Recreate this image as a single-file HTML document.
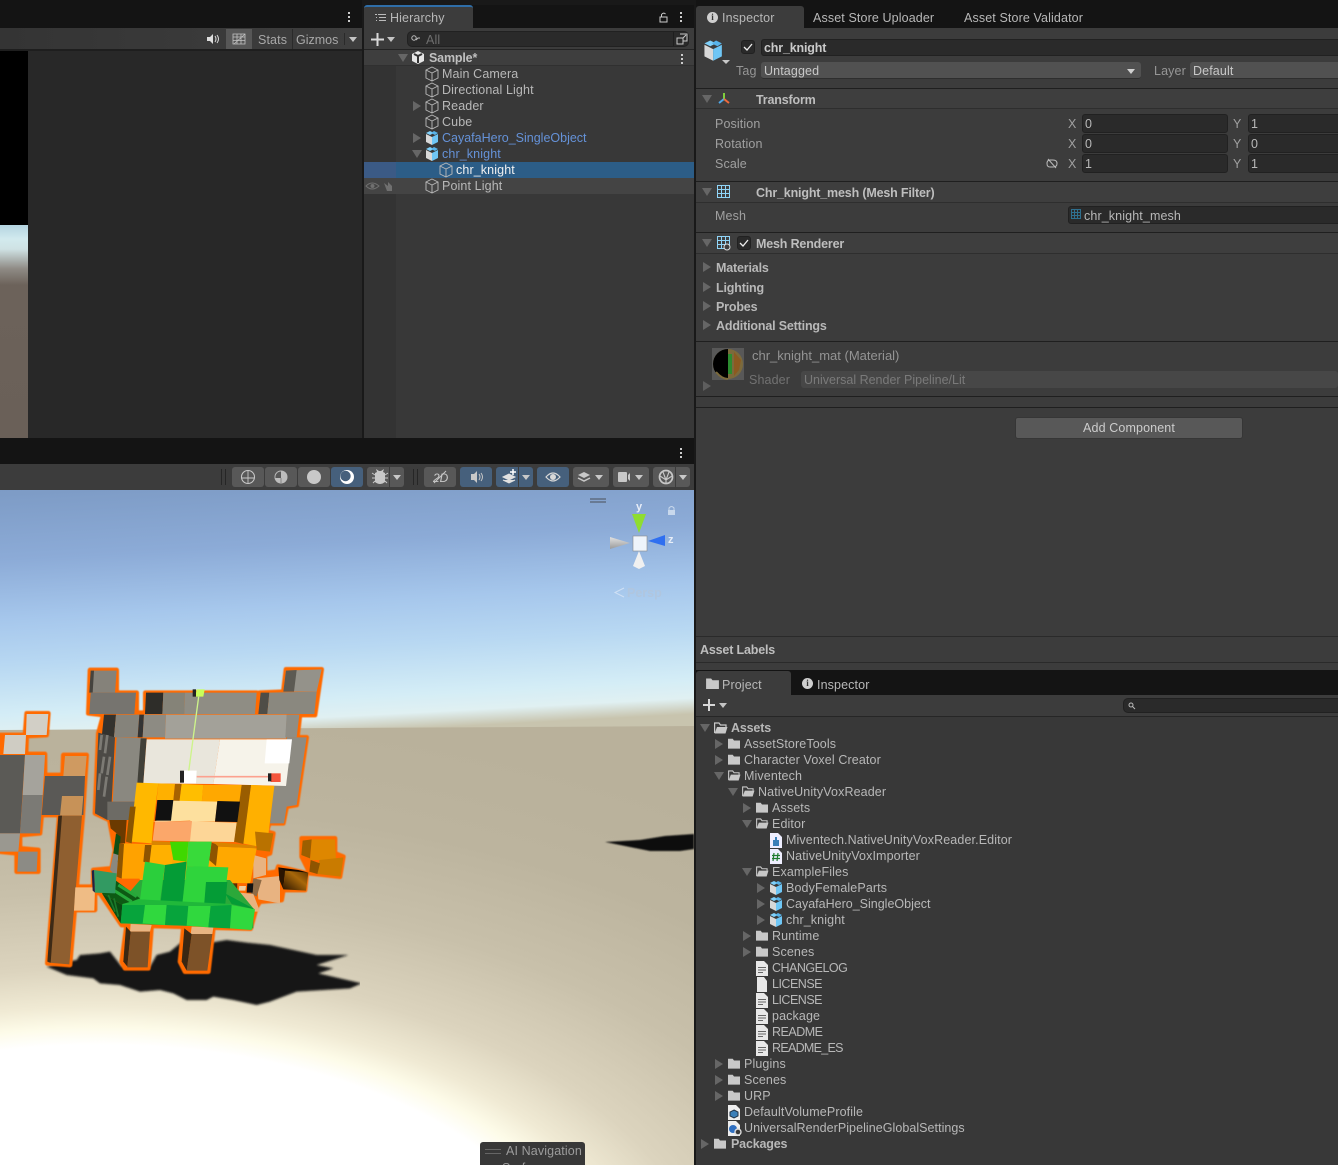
<!DOCTYPE html>
<html><head><meta charset="utf-8"><style>
html,body{margin:0;padding:0;background:#191919;width:1338px;height:1165px;overflow:hidden}
body{position:relative;font-family:"Liberation Sans",sans-serif;font-size:12.5px;color:#b8b8b8}
.a{position:absolute}
.t{position:absolute;white-space:nowrap;line-height:16px;letter-spacing:.12px}
.b{font-weight:bold;letter-spacing:-.17px}
.u{letter-spacing:-.5px}
.l{position:absolute;height:1px;background:#1f1f1f;left:696px;width:642px}
.h{position:absolute;left:696px;width:642px;background:#3e3e3e}
.f{position:absolute;background:#2a2a2a;border:1px solid #212121;border-radius:3px;box-sizing:border-box}
.btn{position:absolute;top:467px;height:20px;background:#585858;border-radius:3px}
.blue{background:#46607c}
svg.i{position:absolute;overflow:visible}
.ar{position:absolute;width:0;height:0}
.ad{border-left:5px solid transparent;border-right:5px solid transparent;border-top:8px solid #666}
.ar2{border-top:5px solid transparent;border-bottom:5px solid transparent;border-left:8px solid #666}
</style></head><body>
<svg width="0" height="0" style="position:absolute"><defs>
<symbol id="cube" viewBox="0 0 14 16"><path d="M7 1L13 4V12L7 15L1 12V4ZM1 4L7 7L13 4M7 7V15" fill="none" stroke="#b8b8b8" stroke-width=".95"/></symbol>
<symbol id="pre" viewBox="0 0 14 16"><path d="M1 4L7 7V15L1 12Z" fill="#d8d8d8"/><path d="M7 7L13 4V12L7 15Z" fill="#6fc6f5"/><path d="M1 3L5 1L9 3L5 5Z" fill="#7fd0fa"/><path d="M9 1L13 3L10 5L6 3Z" fill="#58b4ea"/></symbol>
<symbol id="fo" viewBox="0 0 14 12"><path d="M0 .5H5.500L7 2.500H14V12H0Z" fill="#c8c8c8"/></symbol>
<symbol id="fopen" viewBox="0 0 14 12"><path d="M.6 11V1H5L6.500 3H12V5" fill="none" stroke="#c8c8c8" stroke-width="1.200"/><path d="M3 5H13.500L11.500 11.500H.6Z" fill="#c8c8c8"/></symbol>
<symbol id="doc" viewBox="0 0 12 15"><path d="M0 0H8L12 4V15H0Z" fill="#e8e8e8"/><path d="M2 6.500H10M2 9H10M2 11.500H7" stroke="#666" stroke-width="1"/></symbol>
<symbol id="plain" viewBox="0 0 12 15"><path d="M1 0H8L11 4V15H1Z" fill="#e8e8e8"/></symbol>
</defs></svg>

<!-- top left -->
<div class="a" style="left:0;top:0;width:362px;height:28px;background:#141414"></div>
<div class="a" style="left:0;top:28px;width:362px;height:22px;background:linear-gradient(90deg,#343434,#3e3e3e)"></div>
<div class="a" style="left:0;top:49px;width:362px;height:2px;background:#1e1e1e"></div>
<div class="a" style="left:348px;top:12px;width:2px;height:2px;background:#ccc;box-shadow:0 4px #ccc,0 8px #ccc"></div>
<div class="a" style="left:226px;top:29px;width:26px;height:20px;background:#575757"></div>
<svg class="i" style="left:207px;top:34px" width="14" height="10"><path d="M0 3H3L6 0V10L3 7H0Z" fill="#ddd"/><path d="M8 2Q10 5 8 8M10 1Q13 5 10 9" stroke="#ddd" fill="none"/></svg>
<svg class="i" style="left:232px;top:33px" width="14" height="12"><path d="M1 1H13V11H1ZM1 4H13M1 7.500H13M5 1V11M9 1V11M2 11L13 1" fill="none" stroke="#c4c4c4" stroke-width=".8"/></svg>
<div class="t" style="left:258px;top:32px;color:#a8a8a8">Stats</div>
<div class="a" style="left:292px;top:29px;width:1px;height:20px;background:#2a2a2a"></div>
<div class="t" style="left:296px;top:32px;color:#a8a8a8;letter-spacing:0">Gizmos</div>
<div class="a" style="left:344px;top:33px;width:1px;height:12px;background:#2a2a2a"></div>
<div class="ar" style="left:349px;top:37px;border-left:4px solid transparent;border-right:4px solid transparent;border-top:5px solid #c4c4c4"></div>
<div class="a" style="left:0;top:51px;width:28px;height:174px;background:#000"></div>
<div class="a" style="left:0;top:225px;width:28px;height:213px;background:linear-gradient(180deg,#b4d4e0 0,#d2eaee 14px,#cfe2e4 24px,#8e8a84 44px,#6c625a 60px,#6a6058 100%)"></div>
<div class="a" style="left:28px;top:51px;width:334px;height:387px;background:#282828"></div>
<div class="a" style="left:0;top:438px;width:694px;height:26px;background:#141414"></div>
<div class="a" style="left:680px;top:448px;width:2px;height:2px;background:#ccc;box-shadow:0 4px #ccc,0 8px #ccc"></div>

<!-- hierarchy -->
<div class="a" style="left:364px;top:5px;width:330px;height:23px;background:#141414"></div>
<div class="a" style="left:364px;top:5px;width:109px;height:23px;background:#3c3c3c;border-top:2px solid #2f6ea8;box-sizing:border-box;border-radius:3px 3px 0 0"></div>
<svg class="i" style="left:375px;top:13px" width="11" height="10"><path d="M3 1.500H11M4 4.500H11M4 7.500H11" stroke="#bbb"/><path d="M0 1.500H2M1 4.500H2M1 7.500H2" stroke="#bbb"/></svg>
<div class="t" style="left:390px;top:10px;color:#b8b8b8">Hierarchy</div>
<svg class="i" style="left:659px;top:12px" width="9" height="11"><path d="M1 5H8V10H1ZM2.500 5V2.500Q4.500 0 6.500 2" fill="none" stroke="#ccc"/></svg>
<div class="a" style="left:680px;top:12px;width:2px;height:2px;background:#ccc;box-shadow:0 4px #ccc,0 8px #ccc"></div>
<div class="a" style="left:364px;top:28px;width:330px;height:410px;background:#383838"></div>
<div class="a" style="left:364px;top:28px;width:330px;height:21px;background:#3c3c3c;border-bottom:1px solid #232323"></div>
<svg class="i" style="left:371px;top:33px" width="13" height="13"><path d="M6.500 0V13M0 6.500H13" stroke="#d8d8d8" stroke-width="2"/></svg>
<div class="ar" style="left:387px;top:37px;border-left:4px solid transparent;border-right:4px solid transparent;border-top:5px solid #c4c4c4"></div>
<div class="f" style="left:407px;top:31px;width:282px;height:16px;border-radius:5px"></div>
<svg class="i" style="left:411px;top:35px" width="9" height="8"><circle cx="3" cy="3" r="2.200" fill="none" stroke="#bbb"/><path d="M5 5L7 3H9" stroke="#bbb" fill="none"/></svg>
<div class="t" style="left:426px;top:32px;color:#6e6e6e">All</div>
<div class="a" style="left:673px;top:32px;width:1px;height:14px;background:#1e1e1e"></div>
<svg class="i" style="left:676px;top:33px" width="12" height="12"><path d="M4 1H11V8H7M1 5H7V11H1Z M7 5L10 2" fill="none" stroke="#c8c8c8"/></svg>
<div class="a" style="left:396px;top:66px;width:298px;height:372px;background:#383838"></div>
<div class="a" style="left:364px;top:66px;width:32px;height:372px;background:#333"></div>
<div class="a" style="left:364px;top:50px;width:330px;height:15px;background:#3e3e3e;border-bottom:1px solid #303030"></div>
<div class="a" style="left:364px;top:162px;width:330px;height:16px;background:#2c5d87"></div>
<div class="a" style="left:364px;top:162px;width:32px;height:16px;background:#3b5a85"></div>
<div class="a" style="left:364px;top:178px;width:330px;height:16px;background:#444"></div>
<div class="ar ad" style="left:398px;top:54px"></div>
<svg class="i" style="left:411px;top:50px" width="14" height="15"><path d="M7 1L13 4V11L7 14L1 11V4Z" fill="#e6e6e6"/><path d="M7 6L3 4M7 6L11 4M7 6V13" stroke="#333" stroke-width="2"/></svg>
<div class="t b" style="left:429px;top:50px;color:#c0c0c0">Sample*</div>
<div class="a" style="left:681px;top:54px;width:2px;height:2px;background:#ccc;box-shadow:0 4px #ccc,0 8px #ccc"></div>
<svg class="i" style="left:425px;top:66px" width="14" height="16"><use href="#cube"/></svg><div class="t" style="left:442px;top:66px">Main Camera</div>
<svg class="i" style="left:425px;top:82px" width="14" height="16"><use href="#cube"/></svg><div class="t" style="left:442px;top:82px">Directional Light</div>
<div class="ar ar2" style="left:413px;top:101px"></div>
<svg class="i" style="left:425px;top:98px" width="14" height="16"><use href="#cube"/></svg><div class="t" style="left:442px;top:98px">Reader</div>
<svg class="i" style="left:425px;top:114px" width="14" height="16"><use href="#cube"/></svg><div class="t" style="left:442px;top:114px">Cube</div>
<div class="ar ar2" style="left:413px;top:133px"></div>
<svg class="i" style="left:425px;top:130px" width="14" height="16"><use href="#pre"/></svg><div class="t" style="left:442px;top:130px;color:#6592d8;letter-spacing:0">CayafaHero_SingleObject</div>
<div class="ar ad" style="left:412px;top:150px"></div>
<svg class="i" style="left:425px;top:146px" width="14" height="16"><use href="#pre"/></svg><div class="t" style="left:442px;top:146px;color:#6592d8">chr_knight</div>
<svg class="i" style="left:439px;top:162px" width="14" height="16"><use href="#cube"/></svg><div class="t" style="left:456px;top:162px;color:#f0f0f0">chr_knight</div>
<svg class="i" style="left:366px;top:181px" width="30" height="11"><path d="M0 5Q6 -1 13 5Q6 11 0 5Z" fill="none" stroke="#707070"/><circle cx="6.500" cy="5" r="2" fill="#707070"/><path d="M18 2L22 5V1L26 5V10H21Z" fill="#707070"/></svg>
<svg class="i" style="left:425px;top:178px" width="14" height="16"><use href="#cube"/></svg><div class="t" style="left:442px;top:178px">Point Light</div>

<!-- scene toolbar -->
<div class="a" style="left:0;top:464px;width:694px;height:26px;background:#3c3c3c"></div>
<div class="a" style="left:221px;top:469px;width:3px;height:16px;border-left:1px solid #262626;border-right:1px solid #262626"></div>
<div class="btn" style="left:232px;width:32px"></div><div class="btn" style="left:265px;width:32px"></div><div class="btn" style="left:298px;width:32px"></div><div class="btn blue" style="left:331px;width:32px"></div>
<div class="btn" style="left:367px;width:22px;border-radius:3px 0 0 3px"></div><div class="btn" style="left:390px;width:14px;border-radius:0 3px 3px 0"></div>
<div class="a" style="left:413px;top:469px;width:3px;height:16px;border-left:1px solid #262626;border-right:1px solid #262626"></div>
<div class="btn" style="left:424px;width:32px"></div><div class="btn blue" style="left:460px;width:32px"></div>
<div class="btn blue" style="left:496px;width:22px;border-radius:3px 0 0 3px"></div><div class="btn blue" style="left:519px;width:14px;border-radius:0 3px 3px 0"></div>
<div class="btn blue" style="left:537px;width:32px"></div><div class="btn" style="left:573px;width:36px"></div><div class="btn" style="left:613px;width:36px"></div>
<div class="btn" style="left:653px;width:22px;border-radius:3px 0 0 3px"></div><div class="btn" style="left:676px;width:14px;border-radius:0 3px 3px 0"></div>
<svg class="i" style="left:0;top:464px" width="694" height="26" fill="#c8c8c8">
<g transform="translate(248,13)"><circle r="6.500" fill="none" stroke="#c8c8c8" stroke-width="1.100"/><path d="M0 -6V6M-6 1H6" stroke="#c8c8c8" stroke-width=".9"/></g>
<g transform="translate(281,13)"><circle r="6.500" fill="#bdbdbd"/><path d="M0 1V-5.500A5.500 5.500 0 0 0 -5.500 1Z" fill="#585858"/><path d="M0 1V6" stroke="#777" stroke-width=".8"/></g>
<circle cx="314" cy="13" r="7"/>
<g transform="translate(347,13)"><circle r="7" fill="#fff"/><circle cx="-1.500" cy="-1" r="5.200" fill="#46607c"/></g>
<path d="M376 5L379 7H381L384 5L383 8L385 9V18Q380 22 375 18V9L377 8Z"/><path d="M372 9L375 11M372 14H375M373 19L375 17M388 9L385 11M388 14H385M387 19L385 17" stroke="#c8c8c8"/>
<path d="M393 11H401L397 16Z"/>
<text x="433" y="18" font-family="Liberation Sans" font-size="12" font-style="italic" fill="#c8c8c8">2D</text><path d="M434 19L446 7" stroke="#c8c8c8"/>
<path d="M471 10H474L477 7V19L474 16H471Z"/><path d="M479 10Q481 13 479 16M481 9Q484 13 481 17" stroke="#c8c8c8" fill="none"/>
<path d="M503 13L509 10L515 13L509 16ZM503 16L509 19L515 16" stroke="#e0e0e0" fill="#e0e0e0"/><path d="M510 8H516M513 5V11" stroke="#fff" stroke-width="1.500"/>
<path d="M522 11H530L526 16Z"/>
<path d="M546 13Q553 5 560 13Q553 21 546 13Z" fill="none" stroke="#d8d8d8" stroke-width="1.200"/><circle cx="553" cy="13" r="3" fill="#d8d8d8"/>
<path d="M578 11L584 8L590 11L584 14Z"/><path d="M578 14L584 17L590 14" fill="none" stroke="#c8c8c8" stroke-width="1.500"/><path d="M595 11H603L599 16Z"/>
<rect x="618" y="8" width="9" height="10" rx="1"/><path d="M628 11L630 9V17L628 15Z"/><path d="M635 11H643L639 16Z"/>
<g transform="translate(666,13)"><circle r="6.500" fill="none" stroke="#c8c8c8" stroke-width="1.700"/><path d="M-6 -1L0 3L6 -1M0 3V6.500M-3 -5L0 3M3 -5L0 3" fill="none" stroke="#c8c8c8" stroke-width="1.100"/></g><path d="M679 11H687L683 16Z"/>
</svg>

<!-- scene -->
<div class="a" style="left:0;top:490px;width:694px;height:260px;background:linear-gradient(177deg,#7d9bc5 0,#8cabd7 70px,#a6c7ec 130px,#b8d8f2 175px,#d4edf6 225px,#e0f0f2 244px,#c8c4ae 260px)"></div>
<div class="a" style="left:0;top:725px;width:694px;height:440px;clip-path:polygon(0 5px,694px 1px,694px 440px,0 440px);background:radial-gradient(ellipse 470px 255px at 100px 575px,#fff 0,#fff 100%,#fdfbe8 107%,#f0ead4 115%,#dcd4be 130%,#c8c0aa 160%,#bcb49e 195%,#b9b19b 230%)"></div>
<svg class="a" style="left:0;top:650px;overflow:hidden" width="360" height="370" viewBox="0 0 1080 1110">
<defs><filter id="bl"><feGaussianBlur stdDeviation="3.500"/></filter><filter id="bo"><feGaussianBlur stdDeviation="1.200"/></filter>
<linearGradient id="hg" x1="0" x2="1" y1="1" y2="0"><stop offset="0" stop-color="#2a1400"/><stop offset=".6" stop-color="#a8680a"/><stop offset="1" stop-color="#5c3400"/></linearGradient></defs>
<polygon filter="url(#bl)" fill="#141414" points="140,950 200,935 230,930 240,915 300,910 330,905 365,950 450,950 470,915 510,905 540,880 620,880 680,870 740,878 810,885 880,900 950,915 1045,915 950,945 1000,955 955,970 1085,1000 1050,1015 890,1025 810,1055 770,1065 700,1050 640,1040 620,1050 560,1050 520,1030 480,1020 420,1025 360,1005 300,1000 280,985 200,975"/>
<g fill="#ff6a00" stroke="#ff6a00" stroke-width="14" stroke-linejoin="round" filter="url(#bo)">
<polygon points="270,60 350,60 350,128 410,128 410,188 436,188 436,128 770,128 770,188 778,188 778,128 850,125 858,58 965,58 945,195 900,195 892,262 920,262 890,465 860,470 850,520 808,520 800,545 820,550 810,610 795,615 795,670 830,665 835,650 920,670 915,720 850,720 845,750 780,755 770,770 752,836 365,825 300,730 280,725 280,660 335,655 345,600 328,510 285,490 295,250 310,195 265,190"/>
<polygon points="190,315 260,315 248,500 210,945 142,940 178,495 125,495 120,550 60,555 60,595 115,600 115,665 50,665 50,610 0,605 0,255 75,255 80,190 145,190 140,255 80,258 78,312 135,312 135,375 188,375"/>
<polygon points="225,710 285,710 285,780 225,780"/>
<polygon points="380,825 455,825 445,955 375,955 365,935"/>
<polygon points="550,835 640,835 625,965 555,965 540,935"/>
<polygon points="905,565 1005,565 1005,610 1030,620 1020,680 930,670 905,620"/>
</g>
<!-- axe -->
<polygon fill="#d2cfc6" points="80,192 145,192 140,255 78,255"/><polygon fill="#cfccc3" points="15,255 78,255 75,312 10,312"/>
<polygon fill="#5b5a56" points="0,315 75,315 60,550 0,550"/><polygon fill="#a5a39c" points="75,315 135,315 128,435 68,435"/><polygon fill="#7b7a75" points="68,435 128,435 120,550 60,550"/>
<polygon fill="#5a5956" points="135,378 255,378 250,495 125,495"/><polygon fill="#9a9890" points="0,550 60,550 55,605 0,605"/><polygon fill="#8c8b85" points="55,605 113,605 110,665 52,665"/>
<polygon fill="#cf9a61" points="195,318 260,318 255,378 190,378"/><polygon fill="#c79258" points="186,438 250,438 245,497 180,497"/>
<polygon fill="#8f5f30" points="178,497 246,497 208,943 145,938"/><polygon fill="#3d2a16" points="175,497 186,497 152,938 142,935"/>
<polygon fill="#efbc85" points="226,712 285,712 283,782 222,782"/>
<!-- legs -->
<polygon fill="#e9b582" points="392,822 455,825 450,845 390,845"/><polygon fill="#7d5228" points="392,845 450,845 443,952 382,952"/><polygon fill="#3a2712" points="378,830 392,845 382,950 370,935"/>
<polygon fill="#e9b582" points="575,830 640,832 637,852 572,852"/><polygon fill="#7d5228" points="575,852 637,852 622,962 560,962"/><polygon fill="#3a2712" points="553,835 575,852 560,962 545,935"/>
<!-- helmet -->
<polygon fill="#85827a" points="272,62 350,62 345,128 270,128"/><polygon fill="#45433e" points="272,62 282,62 278,128 268,128"/>
<polygon fill="#76746f" points="272,128 408,128 403,192 268,192"/>
<polygon fill="#2e2d29" points="438,128 490,128 487,192 435,192"/><polygon fill="#858378" points="490,128 555,128 553,192 487,192"/><polygon fill="#8f8d84" points="555,128 770,128 765,192 553,192"/>
<polygon fill="#4f4d47" points="782,128 808,128 802,192 775,192"/><polygon fill="#8a887f" points="808,128 950,125 943,192 802,192"/>
<polygon fill="#94928a" points="858,62 965,58 950,125 850,125"/><polygon fill="#5c5a53" points="858,62 890,60 882,125 850,125"/>
<polygon fill="#33322e" points="312,194 348,194 342,262 305,262"/><polygon fill="#85837b" points="348,194 418,194 413,262 342,262"/><polygon fill="#333" points="418,194 432,194 428,262 413,262"/><polygon fill="#8d8b83" points="432,194 498,194 495,262 428,262"/><polygon fill="#a3a199" points="498,194 860,194 858,266 495,266"/><polygon fill="#8f8d85" points="860,194 898,194 890,262 856,262"/>
<polygon fill="#4c4a46" points="295,248 345,262 335,455 322,510 285,490"/><path d="M305 255L300 300M322 255L315 310M312 320L305 370M330 320L322 375M300 370L295 420M320 380L312 440" stroke="#7c7a74" stroke-width="8" fill="none"/>
<polygon fill="#8a8880" points="350,262 440,265 415,395 405,455 338,455"/><polygon fill="#414039" points="422,265 440,265 430,400 412,400"/>
<polygon fill="#8d8b83" points="860,262 920,262 890,465 860,470 852,520 810,520 822,405 858,405"/><polygon fill="#6d6b65" points="322,455 405,455 395,510 322,510"/>
<polygon fill="#e9e6dc" points="440,268 660,268 640,402 430,400"/><polygon fill="#f6f3ea" points="660,268 875,268 858,408 640,402"/><polygon fill="#ffffff" points="800,268 876,268 868,340 794,340"/>
<!-- body block in crop coords -->
<g transform="translate(270,390)">
<polygon fill="#ffa800" points="100,190 500,205 480,310 150,300"/>
<polygon fill="#6b3a00" points="58,120 110,120 105,190 85,190 80,160 62,145"/>
<polygon fill="#0e4d14" points="78,160 92,170 85,250 70,220"/>
<polygon fill="#8a8880" points="70,220 85,225 80,290 60,270"/>
<polygon fill="#ffb800" points="140,8 205,10 190,130 185,190 120,185"/>
<polygon fill="#8a5500" points="120,80 137,80 125,190 108,185"/>
<polygon fill="#ffb000" points="205,10 255,12 250,62 200,60"/>
<polygon fill="#a86200" points="255,12 275,12 268,68 250,62"/>
<polygon fill="#ffbe00" points="275,12 340,15 335,70 268,68"/>
<polygon fill="#ffa800" points="340,15 455,15 450,65 335,70"/>
<polygon fill="#ffb000" points="483,15 553,18 530,205 458,190"/>
<polygon fill="#9a5d00" points="455,15 483,15 460,192 432,185"/>
<polygon fill="#fde09e" points="245,62 382,65 375,125 305,125 300,122 190,126 200,122"/>
<polygon fill="#fdd697" points="305,124 440,128 432,186 298,184"/>
<polygon fill="#fba76a" points="195,125 306,123 300,184 188,182"/>
<polygon fill="#111" points="202,60 250,60 243,122 195,122"/>
<polygon fill="#111" points="382,63 450,65 442,126 375,125"/>
<polygon fill="#ffa200" points="100,192 168,194 158,296 92,296"/>
<polygon fill="#8e5400" points="88,190 102,192 95,296 80,290"/>
<polygon fill="#8e5400" points="165,195 185,195 178,252 160,245"/>
<polygon fill="#ffb000" points="185,195 250,195 245,258 180,255"/>
<polygon fill="#d98500" points="185,183 250,187 250,195 185,195"/>
<polygon fill="#b97200" points="495,155 550,160 540,215 500,210"/>
<polygon fill="#e8b381" points="490,225 528,235 528,285 490,295"/>
<polygon fill="#ffa800" points="385,200 498,205 482,305 415,310 420,262 378,258"/>
<polygon fill="#8e5400" points="365,188 385,195 378,258 357,240"/>
<polygon fill="#d98500" points="370,186 495,197 498,205 385,200"/>
<polygon fill="#e8b381" points="500,295 570,288 570,370 505,358"/>
<polygon fill="#8e6a45" points="490,295 515,300 500,350 482,340"/>
<polygon fill="#5a3000" points="412,310 442,310 442,335 410,335"/>
<polygon fill="#ff6a00" points="442,310 472,310 472,338 442,338"/><polygon fill="#f0d0a0" points="448,318 468,318 466,332 446,332"/>
<polygon fill="#111" points="472,310 490,310 488,338 470,338"/>
<polygon fill="#e8b381" points="420,335 490,342 510,395 495,395"/>
<polygon fill="#2ca83a" points="150,300 420,300 490,385 490,445 92,430 90,370"/>
<polygon fill="#3fd800" points="240,185 295,185 290,245 250,240"/>
<polygon fill="#38da3a" points="295,185 365,185 355,262 290,258"/>
<polygon fill="#2bcf3c" points="165,245 225,255 210,365 150,358"/>
<polygon fill="#049c36" points="225,255 290,245 277,372 212,366"/>
<polygon fill="#2fd43c" points="290,258 415,262 405,340 345,345 345,378 277,372"/>
<polygon fill="#049c36" points="348,306 412,306 405,382 342,380"/>
<polygon fill="#0d5a14" points="75,300 150,355 97,375 36,340"/>
<path d="M85 315L140 350M70 330L125 365" stroke="#26a83a" stroke-width="9"/>
<polygon fill="#0a4a12" points="36,340 97,375 92,430"/>
<path d="M55 345L75 395M72 355L85 410" stroke="#1a7a2a" stroke-width="5"/>
<polygon fill="#329a62" points="12,270 80,280 75,340 15,338"/>
<polygon fill="#224" points="5,272 12,270 15,338 8,332"/>
<polygon fill="#049c36" points="405,340 495,388 425,372"/>
<polygon fill="#20b83a" points="150,358 425,372 425,380 97,378 97,372"/>
<polygon fill="#07a43c" points="97,375 165,375 158,430 92,430"/>
<polygon fill="#30d83e" points="165,375 230,375 225,435 158,430"/>
<polygon fill="#07a43c" points="230,375 295,378 290,437 225,435"/>
<polygon fill="#30d83e" points="295,378 362,378 355,442 290,437"/>
<polygon fill="#07a43c" points="362,378 425,375 420,445 355,442"/>
<polygon fill="#30d83e" points="425,375 495,388 485,450 420,445"/>
</g>
<polygon fill="#120800" points="835,652 895,660 925,668 855,680"/><polygon fill="#2a1400" points="835,652 855,662 850,718 838,690"/><polygon fill="url(#hg)" points="855,662 925,668 918,722 850,718"/>
<polygon fill="#de8700" points="935,568 1005,568 1008,630 930,630"/><polygon fill="#9c5f00" points="908,572 935,568 930,625 904,615"/><polygon fill="#c97b00" points="958,630 1030,622 1022,680 952,672"/><polygon fill="#8e5400" points="932,630 960,640 952,672 928,665"/>
<!-- gizmo -->
<polygon fill="#c9ff5a" points="590,118 614,118 610,140 586,140"/><rect x="578" y="118" width="10" height="22" fill="#222"/>
<line x1="596" y1="140" x2="566" y2="365" stroke="#cdf48a" stroke-width="4"/>
<line x1="590" y1="380" x2="805" y2="380" stroke="#fca18f" stroke-width="5"/>
<polygon fill="#fff" points="550,362 590,362 588,400 548,400"/><rect x="540" y="362" width="12" height="36" fill="#222"/>
<rect x="812" y="370" width="30" height="26" fill="#f4553c"/><rect x="804" y="370" width="10" height="24" fill="#222"/>
</svg>
<svg class="a" style="left:0;top:490px;overflow:visible" width="694" height="675" viewBox="0 490 694 675">
<defs>
<filter id="b2"><feGaussianBlur stdDeviation=".8"/></filter>
<linearGradient id="gl" x1="0" x2="0" y1="0" y2="1"><stop offset="0" stop-color="#e2e2e2"/><stop offset="1" stop-color="#9a9a9a"/></linearGradient>
</defs>
<polygon filter="url(#b2)" fill="#0e0e0e" points="605,842 640,840 665,836 694,834 694,849 680,851 650,851 625,846"/>
<path d="M590 499H606M590 502H606" stroke="#4a4f58" stroke-width="1"/>
<polygon fill="#8fdd30" points="632,514 646,514 639,533"/>
<polygon fill="#2f6ff0" points="648,541 665,535 665,546"/>
<polygon fill="url(#gl)" points="610,537 630,543 610,549"/>
<polygon fill="#f0f0f0" points="639,551 645,566 639,569 633,566"/>
<rect x="633" y="536" width="14" height="15" fill="#eef4fb" stroke="#8a8a8a" stroke-width=".6"/>
<text x="636" y="510" font-family="Liberation Sans" font-size="11" font-weight="bold" fill="#e8eef8">y</text>
<text x="668" y="543" font-family="Liberation Sans" font-size="11" font-weight="bold" fill="#e8eef8">z</text>
<rect x="668" y="510" width="7" height="5" fill="#c8d8ec"/><path d="M669 510V508Q671.500 505 674 508V510" fill="none" stroke="#c8d8ec"/>
<path d="M624 588L615 592.500L624 597" fill="none" stroke="#cfe0f4"/>
<text x="627" y="597" font-family="Liberation Sans" font-size="12.500" font-weight="bold" fill="#b0c6df">Persp</text>
</svg>
<div class="a" style="left:480px;top:1142px;width:105px;height:23px;background:#383838;border-radius:3px 3px 0 0;overflow:hidden">
<div class="a" style="left:5px;top:7px;width:16px;height:3px;border-top:1px solid #666;border-bottom:1px solid #666"></div>
<div class="t" style="left:26px;top:1px;color:#9c9c9c">AI Navigation</div>
<div class="t" style="left:22px;top:18px;color:#9c9c9c">Surfaces</div></div>

<!-- divider -->
<div class="a" style="left:694px;top:0;width:2px;height:1165px;background:#191919"></div>

<!-- inspector -->
<div class="a" style="left:696px;top:0;width:642px;height:28px;background:#141414"></div>
<div class="a" style="left:696px;top:6px;width:108px;height:22px;background:#3c3c3c;border-radius:3px 3px 0 0"></div>
<div class="a" style="left:707px;top:12px;width:11px;height:11px;border-radius:50%;background:#cfcfcf;color:#333;font:bold 9px/11px 'Liberation Serif',serif;text-align:center">i</div>
<div class="t" style="left:722px;top:10px">Inspector</div>
<div class="t" style="left:813px;top:10px">Asset Store Uploader</div>
<div class="t" style="left:964px;top:10px">Asset Store Validator</div>
<div class="a" style="left:696px;top:28px;width:642px;height:608px;background:#3c3c3c"></div>
<svg class="i" style="left:703px;top:39px" width="22" height="22"><g transform="scale(1.450)"><use href="#pre" width="14" height="16"/></g></svg>
<div class="ar" style="left:722px;top:60px;border-left:4px solid transparent;border-right:4px solid transparent;border-top:4px solid #c8c8c8"></div>
<div class="f" style="left:741px;top:40px;width:14px;height:14px"></div>
<svg class="i" style="left:743px;top:43px" width="10" height="8"><path d="M1 4L4 7L9 1" fill="none" stroke="#eee" stroke-width="1.300"/></svg>
<div class="f" style="left:761px;top:39px;width:590px;height:17px"></div>
<div class="t b" style="left:764px;top:40px;color:#cacaca">chr_knight</div>
<div class="t" style="left:736px;top:63px;color:#969696">Tag</div>
<div class="a" style="left:761px;top:62px;width:380px;height:17px;background:#515151;border-radius:3px;border-bottom:1px solid #2e2e2e;box-sizing:border-box"></div>
<div class="t" style="left:764px;top:63px;color:#c8c8c8">Untagged</div>
<div class="ar" style="left:1127px;top:69px;border-left:4px solid transparent;border-right:4px solid transparent;border-top:5px solid #d0d0d0"></div>
<div class="t" style="left:1154px;top:63px;color:#969696">Layer</div>
<div class="a" style="left:1190px;top:62px;width:160px;height:17px;background:#515151;border-radius:3px;border-bottom:1px solid #2e2e2e;box-sizing:border-box"></div>
<div class="t" style="left:1193px;top:63px;color:#c8c8c8">Default</div>

<div class="h" style="top:88px;height:21px;border-top:1px solid #1f1f1f;border-bottom:1px solid #2e2e2e;box-sizing:border-box"></div>
<div class="ar ad" style="left:702px;top:95px"></div>
<svg class="i" style="left:717px;top:92px" width="14" height="14"><path d="M7 1V7" stroke="#7fce3c" stroke-width="2"/><path d="M7 7L2 11" stroke="#4fa8e8" stroke-width="2"/><path d="M7 7L12 11" stroke="#ef6a3c" stroke-width="2"/></svg>
<div class="t b" style="left:756px;top:92px;color:#bebebe">Transform</div>
<div class="t" style="left:715px;top:116px;color:#a0a0a0">Position</div>
<div class="t" style="left:715px;top:136px;color:#a0a0a0">Rotation</div>
<div class="t" style="left:715px;top:156px;color:#a0a0a0">Scale</div>
<svg class="i" style="left:1046px;top:158px" width="12" height="11"><path d="M1 5.500Q1 2 4 2H7Q11 2 11 5.500T7 9H4Q1 9 1 5.500ZM2 1L10 10" fill="none" stroke="#bbb"/></svg>
<div class="t" style="left:1068px;top:116px;color:#a0a0a0">X</div><div class="t" style="left:1068px;top:136px;color:#a0a0a0">X</div><div class="t" style="left:1068px;top:156px;color:#a0a0a0">X</div>
<div class="f" style="left:1082px;top:114px;width:146px;height:19px"></div><div class="f" style="left:1082px;top:134px;width:146px;height:19px"></div><div class="f" style="left:1082px;top:154px;width:146px;height:19px"></div>
<div class="t" style="left:1085px;top:116px">0</div><div class="t" style="left:1085px;top:136px">0</div><div class="t" style="left:1085px;top:156px">1</div>
<div class="t" style="left:1233px;top:116px;color:#a0a0a0">Y</div><div class="t" style="left:1233px;top:136px;color:#a0a0a0">Y</div><div class="t" style="left:1233px;top:156px;color:#a0a0a0">Y</div>
<div class="f" style="left:1248px;top:114px;width:100px;height:19px"></div><div class="f" style="left:1248px;top:134px;width:100px;height:19px"></div><div class="f" style="left:1248px;top:154px;width:100px;height:19px"></div>
<div class="t" style="left:1251px;top:116px">1</div><div class="t" style="left:1251px;top:136px">0</div><div class="t" style="left:1251px;top:156px">1</div>

<div class="h" style="top:181px;height:22px;border-top:1px solid #1f1f1f;border-bottom:1px solid #2e2e2e;box-sizing:border-box"></div>
<div class="ar ad" style="left:702px;top:188px"></div>
<svg class="i" style="left:717px;top:185px" width="13" height="13"><path d="M.5 .5H12.500V12.500H.5ZM4.500 .5V12.500M8.500 .5V12.500M.5 4.500H12.500M.5 8.500H12.500" fill="none" stroke="#8fd4f7"/></svg>
<div class="t b" style="left:756px;top:185px;color:#bebebe">Chr_knight_mesh (Mesh Filter)</div>
<div class="t" style="left:715px;top:208px;color:#a0a0a0">Mesh</div>
<div class="f" style="left:1068px;top:206px;width:280px;height:18px"></div>
<svg class="i" style="left:1071px;top:209px" width="10" height="10"><path d="M.5 .5H9.500V9.500H.5ZM3.500 .5V9.500M6.500 .5V9.500M.5 3.500H9.500M.5 6.500H9.500" fill="none" stroke="#2f6f8e"/></svg>
<div class="t" style="left:1084px;top:208px">chr_knight_mesh</div>

<div class="h" style="top:232px;height:22px;border-top:1px solid #1f1f1f;border-bottom:1px solid #2e2e2e;box-sizing:border-box"></div>
<div class="ar ad" style="left:702px;top:239px"></div>
<svg class="i" style="left:717px;top:236px" width="14" height="14"><path d="M.5 .5H12.500V12.500H.5ZM4.500 .5V12.500M8.500 .5V12.500M.5 4.500H12.500M.5 8.500H12.500" fill="none" stroke="#8fd4f7"/><circle cx="10" cy="11" r="3" fill="#3c3c3c" stroke="#ddd"/></svg>
<div class="f" style="left:737px;top:236px;width:14px;height:14px"></div>
<svg class="i" style="left:739px;top:239px" width="10" height="8"><path d="M1 4L4 7L9 1" fill="none" stroke="#eee" stroke-width="1.300"/></svg>
<div class="t b" style="left:756px;top:236px;color:#bebebe">Mesh Renderer</div>
<div class="ar ar2" style="left:703px;top:262px"></div><div class="t b" style="left:716px;top:260px;color:#b8b8b8">Materials</div>
<div class="ar ar2" style="left:703px;top:282px"></div><div class="t b" style="left:716px;top:280px;color:#b8b8b8">Lighting</div>
<div class="ar ar2" style="left:703px;top:301px"></div><div class="t b" style="left:716px;top:299px;color:#b8b8b8">Probes</div>
<div class="ar ar2" style="left:703px;top:320px"></div><div class="t b" style="left:716px;top:318px;color:#b8b8b8">Additional Settings</div>

<div class="l" style="top:341px"></div>
<div class="a" style="left:712px;top:348px;width:32px;height:32px;background:#585858"></div>
<svg class="i" style="left:712px;top:348px" width="32" height="32"><circle cx="16" cy="16" r="15" fill="#7c6a3c"/><path d="M16 1A15 15 0 0 0 16 31Z" fill="#000"/><path d="M16 6H20V26H16Z" fill="#2c8c30"/><path d="M22 4L29 12L27 22L22 28Z" fill="#8c5a20"/><path d="M4 24Q10 31 16 31" stroke="#7c6a3c" stroke-width="2" fill="none"/></svg>
<div class="t" style="left:752px;top:348px;font-size:13px;letter-spacing:0;color:#949494">chr_knight_mat (Material)</div>
<div class="t" style="left:749px;top:372px;color:#727272">Shader</div>
<div class="a" style="left:801px;top:371px;width:537px;height:17px;background:#474747;border-radius:3px"></div>
<div class="t" style="left:804px;top:372px;color:#7a7a7a;letter-spacing:0">Universal Render Pipeline/Lit</div>
<div class="ar" style="left:703px;top:381px;border-top:5px solid transparent;border-bottom:5px solid transparent;border-left:8px solid #5e5e5e"></div>
<div class="l" style="top:396px"></div>
<div class="l" style="top:407px"></div>
<div class="a" style="left:1015px;top:417px;width:228px;height:22px;background:#585858;border-radius:3px;border:1px solid #363636;box-sizing:border-box"></div>
<div class="t" style="left:1015px;top:420px;width:228px;text-align:center;color:#cccccc">Add Component</div>

<div class="a" style="left:696px;top:636px;width:642px;height:34px;background:#3c3c3c"></div>
<div class="l" style="top:636px;background:#2a2a2a"></div>
<div class="l" style="top:662px;background:#2a2a2a"></div>
<div class="t b" style="left:700px;top:642px;color:#bebebe">Asset Labels</div>

<!-- project -->
<div class="a" style="left:696px;top:670px;width:642px;height:25px;background:#141414"></div>
<div class="a" style="left:696px;top:671px;width:95px;height:24px;background:#3c3c3c;border-radius:3px 3px 0 0"></div>
<svg class="i" style="left:706px;top:678px" width="13" height="11"><use href="#fo"/></svg>
<div class="t" style="left:722px;top:677px">Project</div>
<div class="a" style="left:802px;top:678px;width:11px;height:11px;border-radius:50%;background:#cfcfcf;color:#333;font:bold 9px/11px 'Liberation Serif',serif;text-align:center">i</div>
<div class="t" style="left:817px;top:677px">Inspector</div>
<div class="a" style="left:696px;top:695px;width:642px;height:21px;background:#3c3c3c;border-bottom:1px solid #262626"></div>
<svg class="i" style="left:703px;top:699px" width="12" height="12"><path d="M6 0V12M0 6H12" stroke="#d8d8d8" stroke-width="2"/></svg>
<div class="ar" style="left:719px;top:703px;border-left:4px solid transparent;border-right:4px solid transparent;border-top:5px solid #c4c4c4"></div>
<div class="f" style="left:1123px;top:698px;width:225px;height:15px;border-radius:5px"></div>
<svg class="i" style="left:1128px;top:702px" width="8" height="8"><circle cx="3" cy="3" r="2" fill="none" stroke="#bbb"/><path d="M4.500 4.500L7 7" stroke="#bbb"/></svg>
<div class="a" style="left:696px;top:717px;width:642px;height:448px;background:#383838"></div>

<div class="ar ad" style="left:700px;top:724px"></div><svg class="i" style="left:714px;top:722px" width="14" height="12"><use href="#fopen"/></svg><div class="t b" style="left:731px;top:720px">Assets</div>
<div class="ar ar2" style="left:715px;top:739px"></div><svg class="i" style="left:728px;top:738px" width="12" height="11"><use href="#fo"/></svg><div class="t" style="left:744px;top:736px">AssetStoreTools</div>
<div class="ar ar2" style="left:715px;top:755px"></div><svg class="i" style="left:728px;top:754px" width="12" height="11"><use href="#fo"/></svg><div class="t" style="left:744px;top:752px">Character Voxel Creator</div>
<div class="ar ad" style="left:714px;top:772px"></div><svg class="i" style="left:728px;top:770px" width="13" height="11"><use href="#fopen"/></svg><div class="t" style="left:744px;top:768px">Miventech</div>
<div class="ar ad" style="left:728px;top:788px"></div><svg class="i" style="left:742px;top:786px" width="13" height="11"><use href="#fopen"/></svg><div class="t" style="left:758px;top:784px">NativeUnityVoxReader</div>
<div class="ar ar2" style="left:743px;top:803px"></div><svg class="i" style="left:756px;top:802px" width="12" height="11"><use href="#fo"/></svg><div class="t" style="left:772px;top:800px">Assets</div>
<div class="ar ad" style="left:742px;top:820px"></div><svg class="i" style="left:756px;top:818px" width="13" height="11"><use href="#fopen"/></svg><div class="t" style="left:772px;top:816px">Editor</div>
<svg class="i" style="left:770px;top:833px" width="12" height="15"><path d="M0 0H8L12 4V15H0Z" fill="#eef"/><rect x="3" y="7" width="6" height="6" fill="#3a7fb8"/><rect x="5" y="4" width="2" height="3" fill="#3a7fb8"/></svg><div class="t" style="left:786px;top:832px">Miventech.NativeUnityVoxReader.Editor</div>
<svg class="i" style="left:770px;top:849px" width="12" height="15"><path d="M0 0H8L12 4V15H0Z" fill="#eef"/><path d="M4 4L3 12M8 4L7 12M2 6.500H10M2 9.500H10" stroke="#1f7a30" stroke-width="1.200"/></svg><div class="t" style="left:786px;top:848px">NativeUnityVoxImporter</div>
<div class="ar ad" style="left:742px;top:868px"></div><svg class="i" style="left:756px;top:866px" width="13" height="11"><use href="#fopen"/></svg><div class="t" style="left:772px;top:864px">ExampleFiles</div>
<div class="ar ar2" style="left:757px;top:883px"></div><svg class="i" style="left:769px;top:880px" width="14" height="16"><use href="#pre"/></svg><div class="t" style="left:786px;top:880px">BodyFemaleParts</div>
<div class="ar ar2" style="left:757px;top:899px"></div><svg class="i" style="left:769px;top:896px" width="14" height="16"><use href="#pre"/></svg><div class="t" style="left:786px;top:896px;letter-spacing:0">CayafaHero_SingleObject</div>
<div class="ar ar2" style="left:757px;top:915px"></div><svg class="i" style="left:769px;top:912px" width="14" height="16"><use href="#pre"/></svg><div class="t" style="left:786px;top:912px">chr_knight</div>
<div class="ar ar2" style="left:743px;top:931px"></div><svg class="i" style="left:756px;top:930px" width="12" height="11"><use href="#fo"/></svg><div class="t" style="left:772px;top:928px">Runtime</div>
<div class="ar ar2" style="left:743px;top:947px"></div><svg class="i" style="left:756px;top:946px" width="12" height="11"><use href="#fo"/></svg><div class="t" style="left:772px;top:944px">Scenes</div>
<svg class="i" style="left:756px;top:961px" width="12" height="15"><use href="#doc"/></svg><div class="t u" style="left:772px;top:960px">CHANGELOG</div>
<svg class="i" style="left:756px;top:977px" width="12" height="15"><use href="#plain"/></svg><div class="t u" style="left:772px;top:976px">LICENSE</div>
<svg class="i" style="left:756px;top:993px" width="12" height="15"><use href="#doc"/></svg><div class="t u" style="left:772px;top:992px">LICENSE</div>
<svg class="i" style="left:756px;top:1009px" width="12" height="15"><use href="#doc"/></svg><div class="t" style="left:772px;top:1008px">package</div>
<svg class="i" style="left:756px;top:1025px" width="12" height="15"><use href="#doc"/></svg><div class="t u" style="left:772px;top:1024px">README</div>
<svg class="i" style="left:756px;top:1041px" width="12" height="15"><use href="#doc"/></svg><div class="t u" style="left:772px;top:1040px;letter-spacing:-.7px">README_ES</div>
<div class="ar ar2" style="left:715px;top:1059px"></div><svg class="i" style="left:728px;top:1058px" width="12" height="11"><use href="#fo"/></svg><div class="t" style="left:744px;top:1056px">Plugins</div>
<div class="ar ar2" style="left:715px;top:1075px"></div><svg class="i" style="left:728px;top:1074px" width="12" height="11"><use href="#fo"/></svg><div class="t" style="left:744px;top:1072px">Scenes</div>
<div class="ar ar2" style="left:715px;top:1091px"></div><svg class="i" style="left:728px;top:1090px" width="12" height="11"><use href="#fo"/></svg><div class="t" style="left:744px;top:1088px">URP</div>
<svg class="i" style="left:728px;top:1105px" width="12" height="15"><path d="M0 0H8L12 4V15H0Z" fill="#eee"/><path d="M6 5L10 7V11L6 13L2 11V7Z" fill="#3a7fb8" stroke="#234"/></svg><div class="t" style="left:744px;top:1104px">DefaultVolumeProfile</div>
<svg class="i" style="left:728px;top:1121px" width="14" height="15"><path d="M0 0H8L12 4V15H0Z" fill="#eee"/><circle cx="5" cy="8" r="4" fill="#2f6fc0"/><circle cx="10" cy="11" r="3" fill="#383838" stroke="#ddd" stroke-width="1.400"/></svg><div class="t" style="left:744px;top:1120px;letter-spacing:.05px">UniversalRenderPipelineGlobalSettings</div>
<div class="ar ar2" style="left:701px;top:1139px"></div><svg class="i" style="left:714px;top:1138px" width="12" height="11"><use href="#fo"/></svg><div class="t b" style="left:731px;top:1136px">Packages</div>
</body></html>
